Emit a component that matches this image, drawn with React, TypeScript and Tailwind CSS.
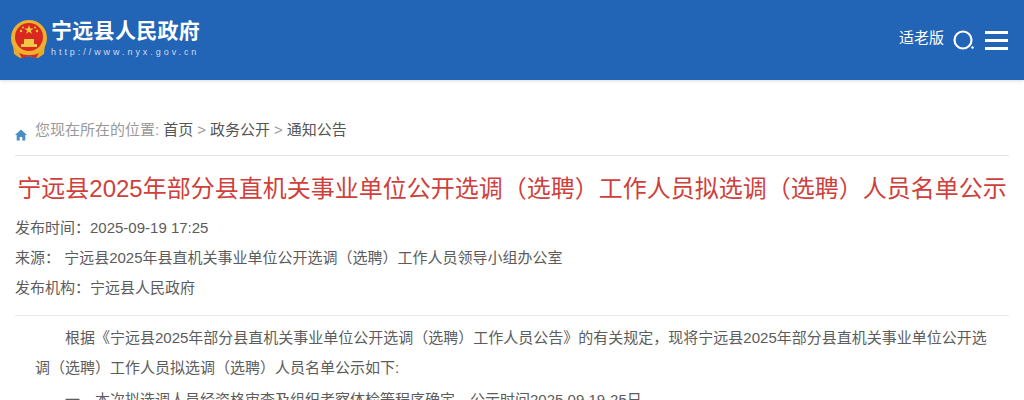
const CJK = "font-['Liberation_Sans','Noto_Sans_CJK_SC',sans-serif]";

function Emblem() {
  return (
    <svg width="38" height="40" viewBox="0 0 38 40" className="shrink-0">
      <circle cx="19" cy="18" r="18" fill="#eeb02e" />
      <circle cx="19" cy="17" r="14" fill="#d8281f" />
      <path d="M19 5l1.2 3.4h3.5l-2.9 2.1 1.1 3.4-2.9-2.1-2.9 2.1 1.1-3.4-2.9-2.1h3.5z" fill="#f5cb3f" />
      <circle cx="11" cy="11" r="1.2" fill="#f5cb3f" />
      <circle cx="27" cy="11" r="1.2" fill="#f5cb3f" />
      <circle cx="13" cy="7.5" r="1" fill="#f5cb3f" />
      <circle cx="25" cy="7.5" r="1" fill="#f5cb3f" />
      <path d="M11 24h16v3H11zM14 19h10v5H14z" fill="#f3c545" />
      <path d="M3 25c4 7 10 9 16 9s12-2 16-9l-1 9-6 4-9-2-9 2-6-4z" fill="#e8a92c" />
      <path d="M9 33c6 3 14 3 20 0l-3 5-7-2-7 2z" fill="#d8281f" />
    </svg>
  );
}

function Header() {
  return (
    <header className="flex h-20 items-start justify-between bg-[#2264b5] shadow-[0_1px_3px_rgba(0,0,0,0.15)]">
      <div className="flex pl-[10px] pt-[20px]">
        <Emblem />
        <div className="ml-[3px] text-white">
          <div className="-mt-[2px] text-[21px] font-bold leading-[26px] tracking-[0.3px]">宁远县人民政府</div>
          <div className="mt-[2px] text-[9px] leading-[12px] tracking-[2.95px] text-[#cfdcf0]">http://www.nyx.gov.cn</div>
        </div>
      </div>
      <div className="flex items-center pr-[16px] pt-[26px]">
        <span className="text-[15px] leading-[20px] text-white">适老版</span>
        <svg width="22" height="20" viewBox="0 0 22 20" className="ml-[9px] mt-[4px]" fill="none">
          <circle cx="10" cy="10" r="8.5" stroke="white" strokeWidth="2.2" />
          <circle cx="19.5" cy="17.5" r="1.2" fill="white" />
        </svg>
        <div className="ml-[10px] mt-[4px] flex w-[23px] flex-col gap-[5px]">
          <div className="h-[3px] bg-white" />
          <div className="h-[3px] bg-white" />
          <div className="h-[3px] bg-white" />
        </div>
      </div>
    </header>
  );
}

function Breadcrumb() {
  return (
    <div className="flex h-[46px] items-center border-b border-[#e3e3e3] pb-[5px] text-[15px]">
      <svg width="12" height="12" viewBox="0 0 12 11" className="mt-[9px] shrink-0">
        <path d="M6 0L0 5.6h1.7V11h3V7.4h2.6V11h3V5.6H12z" fill="#4a8fc4" />
      </svg>
      <span className="ml-[8px] text-[#999]">您现在所在的位置:</span>
      <span className="ml-[4px] text-[#555]">首页</span>
      <span className="mx-[4px] text-[#999]">&gt;</span>
      <span className="text-[#555]">政务公开</span>
      <span className="mx-[4px] text-[#999]">&gt;</span>
      <span className="text-[#555]">通知公告</span>
    </div>
  );
}

export default function App() {
  return (
    <div className={`h-[400px] w-[1024px] overflow-hidden bg-white ${CJK}`}>
      <Header />
      <main className="px-[15px] pt-[30px]">
        <Breadcrumb />
        <h1 className="mt-[17px] whitespace-nowrap text-center text-[24px] font-normal leading-[32px] text-[#cf3f3c]">
          宁远县2025年部分县直机关事业单位公开选调（选聘）工作人员拟选调（选聘）人员名单公示
        </h1>
        <div className="mt-[8px] border-b border-[#e8e8e8] pb-[12px] text-[15px] leading-[30px] text-[#5c5c5c]">
          <p>发布时间：2025-09-19 17:25</p>
          <p>来源： 宁远县2025年县直机关事业单位公开选调（选聘）工作人员领导小组办公室</p>
          <p>发布机构：宁远县人民政府</p>
        </div>
        <div className="mt-[7px] px-[20px] text-[15px] leading-[30px] text-[#5c5c5c]">
          <p className="indent-[30px]">
            根据《宁远县2025年部分县直机关事业单位公开选调（选聘）工作人员公告》的有关规定，现将宁远县2025年部分县直机关事业单位公开选调（选聘）工作人员拟选调（选聘）人员名单公示如下:
          </p>
          <p className="mt-[2px] indent-[30px]">一、本次拟选调人员经资格审查及组织考察体检等程序确定，公示时间2025.09.19-25日</p>
        </div>
      </main>
    </div>
  );
}
